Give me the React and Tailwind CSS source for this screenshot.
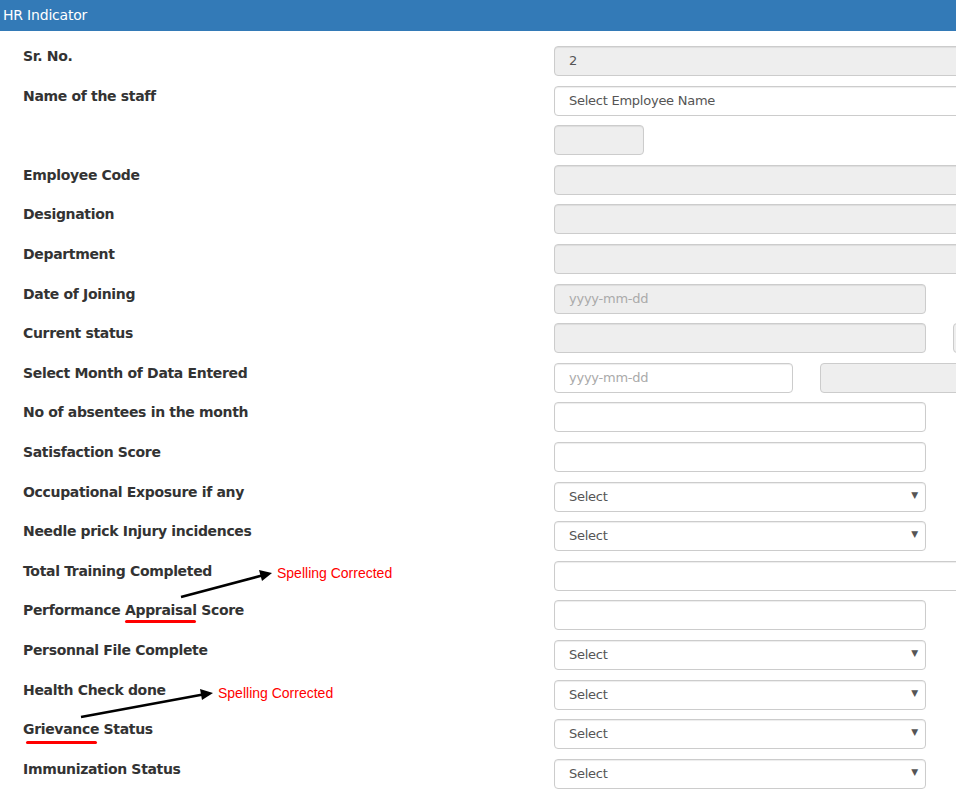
import { useState } from "react";

const FULL = "full";
const HALF = "half";

const ROWS = [
  { label: "Sr. No.", kind: "text", width: FULL, disabled: true, value: "2" },
  { label: "Name of the staff", kind: "select", width: FULL, value: "Select Employee Name", noArrow: true },
  { label: "", kind: "text", width: "small", disabled: true },
  { label: "Employee Code", kind: "text", width: FULL, disabled: true },
  { label: "Designation", kind: "text", width: FULL, disabled: true },
  { label: "Department", kind: "text", width: FULL, disabled: true },
  { label: "Date of Joining", kind: "text", width: HALF, disabled: true, placeholder: "yyyy-mm-dd" },
  { label: "Current status", kind: "text", width: HALF, disabled: true, extra: "status" },
  { label: "Select Month of Data Entered", kind: "text", width: "month", placeholder: "yyyy-mm-dd", extra: "month" },
  { label: "No of absentees in the month", kind: "text", width: HALF },
  { label: "Satisfaction Score", kind: "text", width: HALF },
  { label: "Occupational Exposure if any", kind: "select", width: HALF, value: "Select" },
  { label: "Needle prick Injury incidences", kind: "select", width: HALF, value: "Select" },
  { label: "Total Training Completed", kind: "text", width: FULL },
  { label: "Performance Appraisal Score", kind: "text", width: HALF },
  { label: "Personnal File Complete", kind: "select", width: HALF, value: "Select" },
  { label: "Health Check done", kind: "select", width: HALF, value: "Select" },
  { label: "Grievance Status", kind: "select", width: HALF, value: "Select" },
  { label: "Immunization Status", kind: "select", width: HALF, value: "Select" },
];

function Field({ row }) {
  const widthClass =
    row.width === FULL
      ? "w-[420px]"
      : row.width === "small"
      ? "w-[90px]"
      : row.width === "month"
      ? "w-[239px]"
      : "w-[372px]";
  const bg = row.disabled ? "bg-[#eeeeee]" : "bg-white";

  return (
    <div className={`${widthClass} ${bg} relative flex h-[30px] shrink-0 items-center rounded-[4px] border border-[#cccccc] px-[14px] text-[13px] tracking-[-0.25px] shadow-[inset_0_1px_1px_rgba(0,0,0,0.075)]`}>
      {row.value ? (
        <span className="text-[#555555]">{row.value}</span>
      ) : row.placeholder ? (
        <span className="text-[#aaaaaa]">{row.placeholder}</span>
      ) : null}
      {row.kind === "select" && !row.noArrow && (
        <span className="absolute right-[7px] top-[8px] text-[9px] leading-none text-[#555555]">▼</span>
      )}
    </div>
  );
}

export default function App() {
  const [rows] = useState(ROWS);

  return (
    <div className="relative h-[795px] w-[956px] overflow-hidden bg-white font-['DejaVu_Sans',Verdana,sans-serif] text-[#333333]">
      <div className="flex h-[31px] items-center bg-[#337ab7] pl-[3px] text-[14px] tracking-[-0.2px] text-white">
        HR Indicator
      </div>

      <div className="flex flex-col gap-y-[9.6px] pt-[15px]">
        {rows.map((row, i) => (
          <div key={i} className="flex h-[30px] items-start">
            <div className="w-[554px] shrink-0 pl-[23px] text-[14px] font-bold leading-[20px] tracking-[-0.33px]">
              {row.label}
            </div>
            <Field row={row} />
            {row.extra === "status" && (
              <div className="ml-[27px] h-[30px] w-[40px] shrink-0 rounded-[4px] border border-[#cccccc] bg-[#eeeeee]" />
            )}
            {row.extra === "month" && (
              <div className="ml-[27px] h-[30px] w-[200px] shrink-0 rounded-[4px] border border-[#cccccc] bg-[#eeeeee]" />
            )}
          </div>
        ))}
      </div>

      {/* review annotations drawn over the form */}
      <div className="pointer-events-none absolute left-[125px] top-[620px] h-[3px] w-[71px] rounded-full bg-[#ff0000]" />
      <div className="pointer-events-none absolute left-[26px] top-[741px] h-[3px] w-[71px] rounded-full bg-[#ff0000]" />
      <div className="pointer-events-none absolute left-[277px] top-[563px] font-['Liberation_Sans',sans-serif] text-[14px] text-[#ff0000]">
        Spelling Corrected
      </div>
      <div className="pointer-events-none absolute left-[218px] top-[683px] font-['Liberation_Sans',sans-serif] text-[14px] text-[#ff0000]">
        Spelling Corrected
      </div>
      <svg className="pointer-events-none absolute left-0 top-0" width="956" height="795">
        <line x1="181" y1="597" x2="262" y2="575.5" stroke="#000" strokeWidth="2.5" />
        <polygon points="272,573 259,570 262,581" fill="#000" />
        <line x1="81" y1="717" x2="203" y2="694.5" stroke="#000" strokeWidth="2.5" />
        <polygon points="213,693 200,689 202,700" fill="#000" />
      </svg>
    </div>
  );
}
